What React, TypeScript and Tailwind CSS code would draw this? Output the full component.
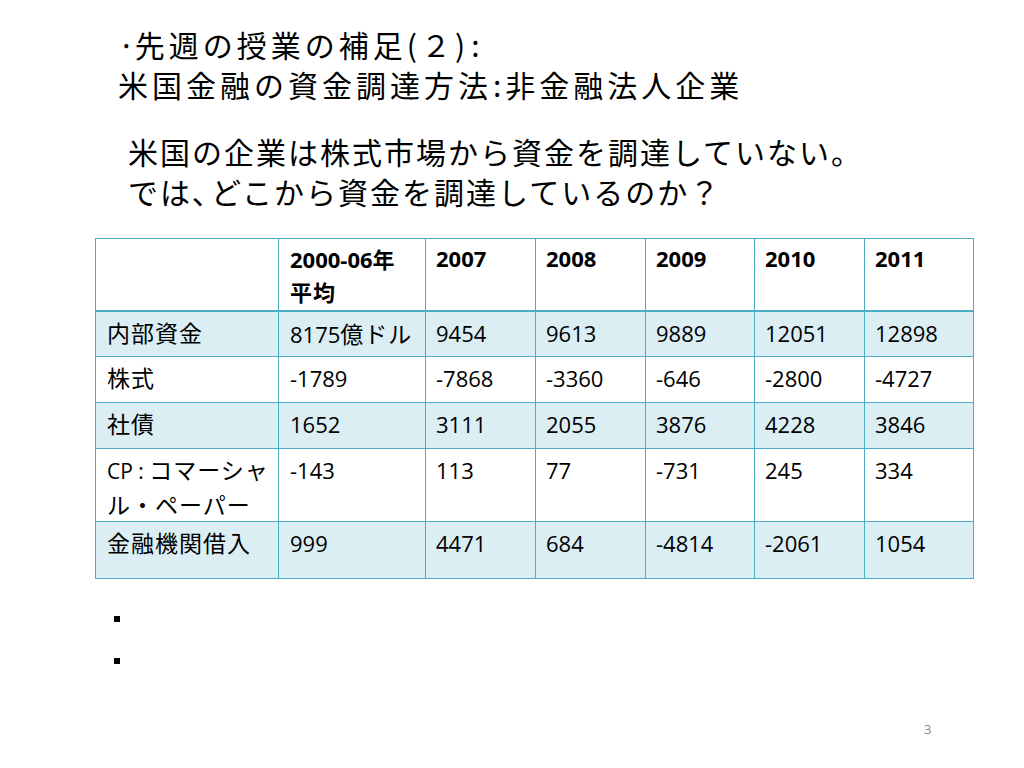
const rows: { label: React.ReactNode; values: React.ReactNode[]; fill: boolean; h: string }[] = [
  {
    label: '内部資金',
    values: [
      <>
        8175<span className="text-[23px] tracking-[1px] font-['Noto_Sans_CJK_JP',sans-serif]">億ドル</span>
      </>,
      '9454',
      '9613',
      '9889',
      '12051',
      '12898',
    ],
    fill: true,
    h: 'h-[46px]',
  },
  { label: '株式', values: ['-1789', '-7868', '-3360', '-646', '-2800', '-4727'], fill: false, h: 'h-[46px]' },
  { label: '社債', values: ['1652', '3111', '2055', '3876', '4228', '3846'], fill: true, h: 'h-[46px]' },
  {
    label: (
      <>
        <span className="font-['Open_Sans',sans-serif] text-[21px] tracking-normal">CP : </span>コマーシャ
        <br />
        ル・ペーパー
      </>
    ),
    values: ['-143', '113', '77', '-731', '245', '334'],
    fill: false,
    h: 'h-[72px]',
  },
  { label: '金融機関借入', values: ['999', '4471', '684', '-4814', '-2061', '1054'], fill: true, h: 'h-[57px]' },
]

const years = ['2007', '2008', '2009', '2010', '2011']
const widths = ['w-[183px]', 'w-[147px]', 'w-[110px]', 'w-[110px]', 'w-[109px]', 'w-[110px]', 'w-[109px]']

export default function App() {
  return (
    <div className="relative w-[1024px] h-[768px] bg-white text-black font-['Noto_Sans_CJK_JP',sans-serif]">
      <div className="pl-[118px] pt-[24px] text-[30px] leading-[40px] tracking-[4px]">
        <div>
          <span className="tracking-normal">·</span>先週の授業の補足(２)<span className="pl-[2px]">:</span>
        </div>
        <div>
          米国金融の資金調達方法<span className="pl-[1px]">:</span>非金融法人企業
        </div>
      </div>

      <div className="pl-[128px] pt-[27px] text-[30px] leading-[40px] tracking-[2px]">
        <div>米国の企業は株式市場から資金を調達していない。</div>
        <div>
          では<span className="[font-feature-settings:'palt'] pr-[2px]">、</span>どこから資金を調達しているのか？
        </div>
      </div>

      <div className="pl-[95px] pt-[27px]">
        <table className="border-collapse table-fixed w-[878px] font-['Open_Sans','Noto_Sans_CJK_JP',sans-serif] text-[22px] leading-[28px]">
          <colgroup>
            {widths.map((w, i) => (
              <col key={i} className={w} />
            ))}
          </colgroup>
          <thead>
            <tr className="h-[72px]">
              <th className="border border-[#4bacc6] border-b-2"></th>
              <th className="border border-[#4bacc6] border-b-2 align-top text-left font-bold pl-[11px] pt-[3px] leading-[32px]">
                2000-06<span className="text-[22px] font-['Noto_Sans_CJK_JP',sans-serif]">年</span>
                <br />
                <span className="text-[22px] tracking-[1px] font-['Noto_Sans_CJK_JP',sans-serif]">平均</span>
              </th>
              {years.map((y) => (
                <th key={y} className="border border-[#4bacc6] border-b-2 align-top text-left font-bold pl-[10px] pt-[5px]">
                  {y}
                </th>
              ))}
            </tr>
          </thead>
          <tbody>
            {rows.map((r, i) => (
              <tr key={i} className={`${r.h} ${r.fill ? 'bg-[#dbeef4]' : 'bg-white'}`}>
                <td className="border border-[#4bacc6] align-top pl-[11px] pt-[4px] font-['Noto_Sans_CJK_JP',sans-serif] text-[23px] leading-[33px] tracking-[1px]">
                  {r.label}
                </td>
                {r.values.map((v, j) => (
                  <td key={j} className={`border border-[#4bacc6] align-top pt-[7px] ${j === 0 ? 'pl-[11px]' : 'pl-[10px]'}`}>
                    {v}
                  </td>
                ))}
              </tr>
            ))}
          </tbody>
        </table>
      </div>

      <div className="pl-[114px] pt-[37px] flex flex-col gap-[36px]">
        <div className="w-[6px] h-[6px] bg-black"></div>
        <div className="w-[6px] h-[6px] bg-black"></div>
      </div>

      <div className="absolute left-[924px] top-[720px] text-[13px] text-[#8a8a8a] font-['Open_Sans',sans-serif]">3</div>
    </div>
  )
}
